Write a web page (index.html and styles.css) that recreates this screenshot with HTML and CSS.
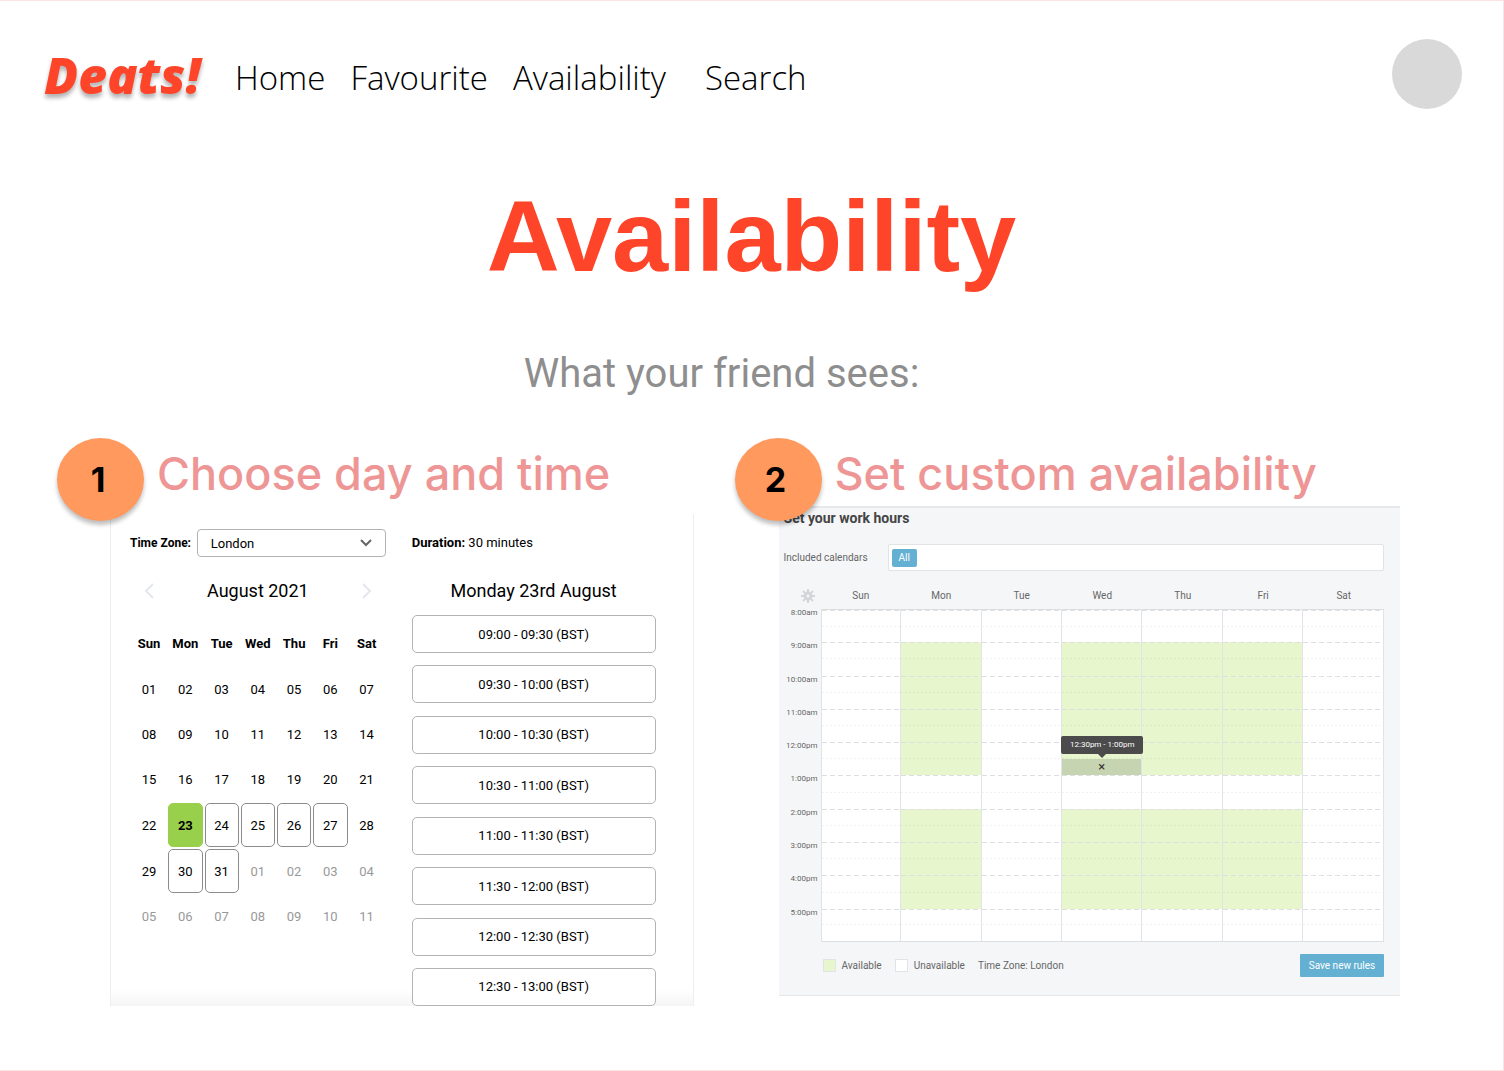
FILE: index.html
```html
<!DOCTYPE html>
<html lang="en">
<head>
    <meta charset="UTF-8">
    <meta name="viewport" content="width=device-width, initial-scale=1.0">
    <title>Deats! - Availability</title>
    <link rel="stylesheet" href="styles.css">
</head>
<body>

<header class="header">
    <a href="#" class="logo">Deats!</a>
    <nav class="nav">
        <a href="#">Home</a>
        <a href="#">Favourite</a>
        <a href="#">Availability</a>
        <a href="#" class="nav-search">Search</a>
    </nav>
    <button type="button" class="avatar" aria-label="Profile"></button>
</header>

<h1>Availability</h1>
<p class="subtitle">What your friend sees:</p>

<main class="steps">
    <section>
        <div class="step-title">
            <span class="badge">1</span>
            <h2>Choose day and time</h2>
        </div>

        <div class="booking">
            <div class="booking-left">
                <div class="timezone">
                    <label for="timezone">Time Zone:</label>
                    <div class="select-box">
                        <select id="timezone" name="timezone">
                            <option>London</option>
                        </select>
                        <svg width="12" height="8" viewBox="0 0 12 8"><path d="M1 1l5 5 5-5" fill="none" stroke="#666" stroke-width="2"/></svg>
                    </div>
                </div>

                <div class="month">
                    <button type="button" aria-label="Previous month"><svg width="10" height="16" viewBox="0 0 10 16"><path d="M9 1L2 8l7 7" fill="none" stroke="#e3e7ee" stroke-width="2"/></svg></button>
                    <h3>August 2021</h3>
                    <button type="button" aria-label="Next month"><svg width="10" height="16" viewBox="0 0 10 16"><path d="M1 1l7 7-7 7" fill="none" stroke="#e3e7ee" stroke-width="2"/></svg></button>
                </div>

                <table class="calendar">
                    <thead>
                        <tr><th>Sun</th><th>Mon</th><th>Tue</th><th>Wed</th><th>Thu</th><th>Fri</th><th>Sat</th></tr>
                    </thead>
                    <tbody>
                        <tr><td>01</td><td>02</td><td>03</td><td>04</td><td>05</td><td>06</td><td>07</td></tr>
                        <tr><td>08</td><td>09</td><td>10</td><td>11</td><td>12</td><td>13</td><td>14</td></tr>
                        <tr><td>15</td><td>16</td><td>17</td><td>18</td><td>19</td><td>20</td><td>21</td></tr>
                        <tr>
                            <td>22</td>
                            <td><button type="button" class="day selected">23</button></td>
                            <td><button type="button" class="day">24</button></td>
                            <td><button type="button" class="day">25</button></td>
                            <td><button type="button" class="day">26</button></td>
                            <td><button type="button" class="day">27</button></td>
                            <td>28</td>
                        </tr>
                        <tr>
                            <td>29</td>
                            <td><button type="button" class="day">30</button></td>
                            <td><button type="button" class="day">31</button></td>
                            <td class="other">01</td><td class="other">02</td><td class="other">03</td><td class="other">04</td>
                        </tr>
                        <tr class="other"><td>05</td><td>06</td><td>07</td><td>08</td><td>09</td><td>10</td><td>11</td></tr>
                    </tbody>
                </table>
            </div>

            <div class="booking-right">
                <p class="duration"><b>Duration:</b> 30 minutes</p>
                <h3>Monday 23rd August</h3>
                <div class="slots">
                    <button type="button">09:00 - 09:30 (BST)</button>
                    <button type="button">09:30 - 10:00 (BST)</button>
                    <button type="button">10:00 - 10:30 (BST)</button>
                    <button type="button">10:30 - 11:00 (BST)</button>
                    <button type="button">11:00 - 11:30 (BST)</button>
                    <button type="button">11:30 - 12:00 (BST)</button>
                    <button type="button">12:00 - 12:30 (BST)</button>
                    <button type="button">12:30 - 13:00 (BST)</button>
                </div>
            </div>
        </div>
    </section>

    <section>
        <div class="step-title">
            <span class="badge">2</span>
            <h2>Set custom availability</h2>
        </div>

        <div class="hours">
            <h3>Set your work hours</h3>

            <div class="calendars">
                <label for="calendars">Included calendars</label>
                <div class="tag-box">
                    <span class="tag">All</span>
                    <input type="text" id="calendars" name="calendars">
                </div>
            </div>

            <table class="week">
                <thead>
                    <tr>
                        <th class="gear">
                            <button type="button" aria-label="Settings"><svg width="14" height="14" viewBox="0 0 14 14"><circle cx="7" cy="7" r="3" fill="none" stroke="#d3d5d8" stroke-width="3"/><path d="M7 0v3M7 11v3M0 7h3M11 7h3M2 2l2 2M10 10l2 2M2 12l2-2M10 4l2-2" stroke="#d3d5d8" stroke-width="2"/></svg></button>
                        </th>
                        <th>Sun</th><th>Mon</th><th>Tue</th><th>Wed</th><th>Thu</th><th>Fri</th><th>Sat</th>
                    </tr>
                </thead>
                <tbody>
                    <tr class="first"><th>8:00am</th><td></td><td></td><td></td><td></td><td></td><td></td><td></td></tr>
                    <tr><th>9:00am</th><td></td><td class="on"></td><td></td><td class="on"></td><td class="on"></td><td class="on"></td><td></td></tr>
                    <tr><th>10:00am</th><td></td><td class="on"></td><td></td><td class="on"></td><td class="on"></td><td class="on"></td><td></td></tr>
                    <tr><th>11:00am</th><td></td><td class="on"></td><td></td><td class="on"></td><td class="on"></td><td class="on"></td><td></td></tr>
                    <tr>
                        <th>12:00pm</th><td></td><td class="on"></td><td></td>
                        <td class="on">
                            <button type="button" class="block" aria-label="Remove">×</button>
                            <span class="tooltip">12:30pm - 1:00pm</span>
                        </td>
                        <td class="on"></td><td class="on"></td><td></td>
                    </tr>
                    <tr><th>1:00pm</th><td></td><td></td><td></td><td></td><td></td><td></td><td></td></tr>
                    <tr><th>2:00pm</th><td></td><td class="on"></td><td></td><td class="on"></td><td class="on"></td><td class="on"></td><td></td></tr>
                    <tr><th>3:00pm</th><td></td><td class="on"></td><td></td><td class="on"></td><td class="on"></td><td class="on"></td><td></td></tr>
                    <tr><th>4:00pm</th><td></td><td class="on"></td><td></td><td class="on"></td><td class="on"></td><td class="on"></td><td></td></tr>
                    <tr class="last"><th>5:00pm</th><td></td><td></td><td></td><td></td><td></td><td></td><td></td></tr>
                </tbody>
            </table>

            <div class="legend">
                <span class="swatch green"></span>
                <span>Available</span>
                <span class="swatch"></span>
                <span>Unavailable</span>
                <span>Time Zone: London</span>
                <button type="button" class="save">Save new rules</button>
            </div>
        </div>
    </section>
</main>

</body>
</html>
```
FILE: styles.css
```css
* {
    box-sizing: border-box;
}
body {
    margin: 0;
    min-height: 100vh;
    font-family: Roboto, Arial, sans-serif;
    color: #000;
    background-color: #fff;
    border: 1px solid #ffe3e3;
    border-left: none;
}
h1, h2, h3, p {
    margin: 0;
}
button {
    padding: 0;
    border: none;
    background: none;
    font-family: inherit;
    color: inherit;
    cursor: pointer;
}
svg {
    display: block;
}

/* header */
.header {
    display: flex;
    align-items: center;
    padding: 38px 41px 0 44px;
}
.logo {
    width: 191px;
    padding-top: 2px;
    font-family: "Open Sans", sans-serif;
    font-size: 50px;
    font-weight: 800;
    font-style: italic;
    line-height: 68px;
    color: #ff4529;
    text-decoration: none;
    text-shadow: 0 4px 4px rgba(0, 0, 0, 0.3);
}
.nav {
    display: flex;
    flex: 1;
    gap: 25px;
    padding-top: 6px;
}
.nav a {
    font-family: "Open Sans", sans-serif;
    font-size: 33px;
    font-weight: 300;
    color: #000;
    text-decoration: none;
}
.nav .nav-search {
    margin-left: 14px;
}
.avatar {
    width: 70px;
    height: 70px;
    border-radius: 50%;
    background-color: #d9d9d9;
}

h1 {
    margin-top: 69px;
    font-family: "Liberation Sans", Arial, sans-serif;
    font-size: 101px;
    line-height: 116px;
    text-align: center;
    color: #ff4529;
}
.subtitle {
    margin-top: 56px;
    padding-right: 60px;
    font-size: 40px;
    line-height: 48px;
    text-align: center;
    color: #8e8e8e;
}

/* two steps */
.steps {
    display: grid;
    grid-template-columns: 22fr 23fr;
    gap: 41px;
    margin-top: 40px;
    padding: 0 103px 64px 57px;
}
.step-title {
    position: relative;
    z-index: 1;
    display: flex;
    gap: 13px;
}
.badge {
    width: 87px;
    height: 83px;
    padding-right: 5px;
    border-radius: 50%;
    background-color: #ff995e;
    box-shadow: 0 4px 4px rgba(0, 0, 0, 0.25);
    font-family: Inter, sans-serif;
    font-size: 34px;
    font-weight: 700;
    line-height: 83px;
    text-align: center;
}
h2 {
    font-family: Inter, sans-serif;
    font-size: 45px;
    font-weight: 500;
    line-height: 72px;
    white-space: nowrap;
    color: #ee9696;
}

/* booking widget */
.booking {
    display: grid;
    grid-template-columns: 256fr 244fr;
    gap: 26px;
    margin: -7px 0 0 53px;
    min-height: 492px;
    padding: 15px 37px 0 19px;
    border: solid #eee;
    border-width: 0 1px;
    background: linear-gradient(to top, #f5f5f5, #fff 16px);
    font-size: 13px;
}
.booking h3 {
    font-size: 18px;
    font-weight: 400;
    line-height: 24px;
    text-align: center;
}
.timezone {
    display: flex;
    align-items: center;
    justify-content: space-between;
    font-size: 12px;
    font-weight: 700;
    white-space: nowrap;
}
.select-box {
    position: relative;
    width: 189px;
}
.select-box select {
    appearance: none;
    width: 100%;
    height: 28px;
    padding: 0 13px;
    border: 1px solid #b3b3b3;
    border-radius: 4px;
    background-color: #fff;
    font-family: inherit;
    font-size: 13px;
    color: #000;
}
.select-box svg {
    position: absolute;
    top: 10px;
    right: 14px;
    pointer-events: none;
}
.month {
    display: flex;
    align-items: center;
    justify-content: space-between;
    margin-top: 22px;
    padding: 0 14px;
}
.calendar {
    width: 100%;
    margin-top: 27px;
    table-layout: fixed;
    border-spacing: 2px;
    text-align: center;
}
.calendar th, .calendar td {
    height: 43px;
    padding: 0;
}
.calendar th {
    height: 22px;
}
.calendar thead::after {
    content: "";
    display: block;
    height: 10px;
}
.calendar .other {
    color: #999;
}
.day {
    display: block;
    width: 100%;
    height: 44px;
    border: 1px solid #8c8c8c;
    border-radius: 5px;
    font-size: 13px;
}
.day.selected {
    border-color: #98d04c;
    background-color: #98d04c;
    font-weight: 700;
}
.booking-right {
    display: flex;
    flex-direction: column;
}
.duration {
    line-height: 28px;
}
.booking-right h3 {
    margin-top: 22px;
}
.slots {
    display: flex;
    flex: 1;
    flex-direction: column;
    justify-content: space-between;
    margin-top: 12px;
}
.slots button {
    height: 38px;
    border: 1px solid #b3b3b3;
    border-radius: 5px;
    background-color: #fff;
    font-size: 13px;
}

/* work hours widget */
.hours {
    margin: -15px 0 0 44px;
    padding: 0 16px 18px 5px;
    border: solid #e6e8ec;
    border-width: 2px 0 1px;
    background-color: #f5f6f8;
    font-size: 10px;
    color: #666;
}
.hours h3 {
    font-size: 14px;
    font-weight: 700;
    line-height: 21px;
    color: #444;
}
.calendars {
    display: flex;
    align-items: center;
    margin-top: 15px;
}
.calendars label {
    width: 104px;
}
.tag-box {
    display: flex;
    flex: 1;
    align-items: center;
    height: 27px;
    padding: 0 3px;
    border: 1px solid #e1e3e6;
    border-radius: 2px;
    background-color: #fff;
}
.tag {
    padding: 0 7px;
    border-radius: 2px;
    background-color: #64b0d2;
    line-height: 18px;
    color: #fff;
}
.tag-box input {
    flex: 1;
    min-width: 0;
    border: none;
    outline: none;
    background: none;
}
.week {
    width: 100%;
    height: 361px;
    margin-top: 10px;
    table-layout: fixed;
    border-spacing: 0;
}
.week th {
    height: 28px;
    padding: 0;
    font-weight: 400;
}
.week .gear {
    width: 37px;
}
.gear button {
    display: block;
    margin: 2px 0 0 17px;
}
.week tbody th {
    height: auto;
    padding-right: 3px;
    font-size: 8px;
    line-height: 8px;
    text-align: right;
    vertical-align: top;
}
.week td {
    position: relative;
    padding: 0;
    border-right: 1px solid #e1e3e6;
    background-color: #fff;
    background-image:
        repeating-linear-gradient(to right, #dcdee0 0 5px, transparent 5px 8px),
        repeating-linear-gradient(to right, rgba(0, 0, 0, 0.05) 0 2px, transparent 2px 4px);
    background-size: 100% 1px;
    background-position: 0 0, 0 50%;
    background-repeat: no-repeat;
}
.week th + td {
    border-left: 1px solid #e1e3e6;
}
.week .first td {
    border-top: 1px solid #dcdee0;
}
.week .last td {
    border-bottom: 1px solid #dcdee0;
}
.week .on {
    background-color: #e7f6cd;
}
.block {
    position: absolute;
    left: 0;
    right: 0;
    bottom: 0;
    width: 100%;
    height: 50%;
    background-color: #c7d4b1;
    font-size: 13px;
    line-height: 16px;
    color: #333;
}
.tooltip {
    position: absolute;
    z-index: 1;
    left: -1px;
    right: -2px;
    bottom: 21px;
    border-radius: 2px;
    background-color: #4b4b4b;
    font-size: 8px;
    line-height: 18px;
    text-align: center;
    white-space: nowrap;
    color: #fff;
}
.tooltip::after {
    content: "";
    position: absolute;
    top: 100%;
    left: 50%;
    margin-left: -4px;
    border: 4px solid transparent;
    border-top-color: #4b4b4b;
    border-bottom: none;
}
.legend {
    display: flex;
    align-items: center;
    gap: 13px;
    margin-top: 12px;
    padding-left: 39px;
}
.swatch {
    width: 13px;
    height: 13px;
    margin-right: -7px;
    border: 1px solid #e1e3e6;
    background-color: #fff;
}
.swatch.green {
    background-color: #e7f6cd;
}
.save {
    width: 84px;
    height: 23px;
    margin-left: auto;
    border-radius: 1px;
    background-color: #64b0d2;
    font-size: 10px;
    color: #fff;
}
```
